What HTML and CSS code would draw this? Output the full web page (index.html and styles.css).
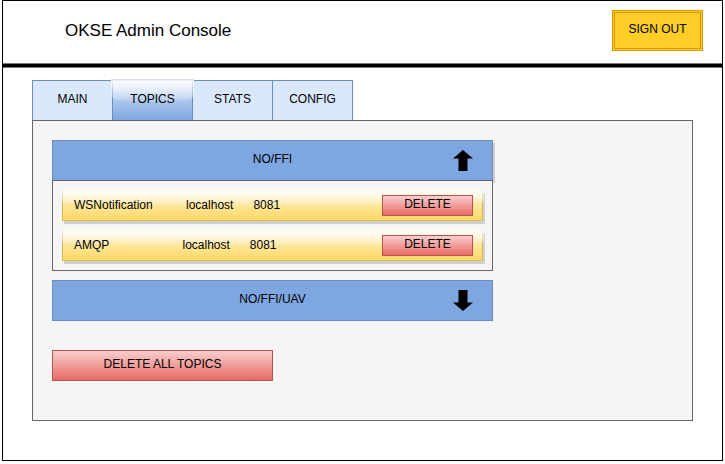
FILE: index.html
```html
<!DOCTYPE html>
<html lang="en">
<head>
<meta charset="utf-8">
<title>OKSE Admin Console</title>
<link rel="stylesheet" href="styles.css">
</head>
<body>
<div class="window">
  <header class="header">
    <h1 class="title">OKSE Admin Console</h1>
    <button class="sign-out" type="button">SIGN OUT</button>
  </header>
  <main class="content">
    <nav class="tabs">
      <a class="tab" href="#main">MAIN</a>
      <a class="tab tab-active glass" href="#topics" aria-current="page"><span class="label">TOPICS</span></a>
      <a class="tab" href="#stats">STATS</a>
      <a class="tab" href="#config">CONFIG</a>
    </nav>
    <section class="panel">
      <div class="topics">
        <div class="topic">
          <button class="topic-head topic-open" type="button" aria-expanded="true">
            <span class="topic-name">NO/FFI</span>
            <svg class="arrow" viewBox="0 0 20 21" aria-hidden="true"><path d="M10 0L20 8.500H14.500V21H5.500V8.500H0Z"/></svg>
          </button>
          <ul class="subscribers">
            <li class="subscriber glass">
              <span class="label details">WSNotification          localhost      8081</span>
              <button class="danger delete" type="button">DELETE</button>
            </li>
            <li class="subscriber glass">
              <span class="label details">AMQP                      localhost      8081</span>
              <button class="danger delete" type="button">DELETE</button>
            </li>
          </ul>
        </div>
        <div class="topic">
          <button class="topic-head" type="button" aria-expanded="false">
            <span class="topic-name">NO/FFI/UAV</span>
            <svg class="arrow" viewBox="0 0 20 21" aria-hidden="true"><path d="M10 21L20 12.500H14.500V0H5.500V12.500H0Z"/></svg>
          </button>
        </div>
      </div>
      <button class="danger delete-all" type="button">DELETE ALL TOPICS</button>
    </section>
  </main>
</div>
</body>
</html>
```
FILE: styles.css
```css
*,
*::before,
*::after {
  box-sizing: border-box;
}

body {
  margin: 0 2px;
  background: #fff;
  color: #000;
  font: 12px/14px "Liberation Sans", Arial, sans-serif;
}

button {
  margin: 0;
  padding: 0 0 3px;
  color: inherit;
  font: inherit;
  cursor: pointer;
}

.window {
  border: 1px solid #000;
  padding-bottom: 39px;
}

.header {
  position: relative;
  display: flex;
  justify-content: space-between;
  align-items: flex-start;
  padding: 9px 19px 12px 62px;
  border-bottom: 5px solid #000;
}

/* softened edges of the divider */
.header::after {
  content: "";
  position: absolute;
  left: 0;
  right: 0;
  bottom: -5px;
  height: 5px;
  border: solid #777;
  border-width: 1px 0;
}

.title {
  margin: 0;
  font-size: 17px;
  font-weight: 400;
  line-height: 41px;
}

.sign-out {
  width: 91px;
  height: 41px;
  border: 3px double #d79b00;
  background: #ffcd28;
}

.content {
  padding: 12px 29px 0;
}

.tabs {
  display: flex;
  margin-bottom: -1px;
}

.tab {
  display: flex;
  align-items: center;
  justify-content: center;
  width: 81px;
  height: 41px;
  margin-right: -1px;
  padding-bottom: 3px;
  border: 1px solid #6c8ebf;
  background: #dae8fc;
  color: inherit;
  text-decoration: none;
}

.tab-active {
  z-index: 1;
  background: linear-gradient(#dae8fc, #7ea6e0);
}

/* curved white highlight over the upper half */
.glass {
  position: relative;
}

.glass::before {
  content: "";
  position: absolute;
  top: -2px;
  left: -2px;
  right: -2px;
  height: 60%;
  border-radius: 0 0 50% 50% / 0 0 25% 25%;
  background: linear-gradient(rgba(255, 255, 255, 0.9), rgba(255, 255, 255, 0.1));
}

.tab-active::before {
  box-shadow: inset 0 1px #d5dfec;
}

.label {
  position: relative;
}

.panel {
  position: relative;
  z-index: 2;
  padding: 19px 19px 39px;
  border: 1px solid #666;
  background: #f5f5f5;
}

.topics {
  display: grid;
  gap: 9px;
  max-width: 441px;
  margin-bottom: 29px;
}

.topic-head {
  display: grid;
  grid-template-columns: 1fr auto 1fr;
  align-items: center;
  width: 100%;
  height: 41px;
  padding: 0 19px;
  border: 1px solid #6c8ebf;
  background: #7ea6e0;
}

.topic-open {
  height: 40px;
  border-bottom: 0;
  box-shadow: 2px 3px #d0d0d0;
}

.topic-name {
  grid-column: 2;
  padding-bottom: 3px;
}

.arrow {
  justify-self: end;
  width: 20px;
  height: 21px;
}

.subscribers {
  position: relative;
  display: grid;
  gap: 9px;
  margin: 0;
  padding: 9px;
  border: 1px solid #666;
  background: #f5f5f5;
  list-style: none;
}

.subscriber {
  display: flex;
  align-items: center;
  justify-content: space-between;
  height: 31px;
  padding: 0 9px 0 11px;
  border: 1px solid #d6b656;
  background: linear-gradient(#fff2cc, #ffd966);
  box-shadow: 2px 3px #d0d0d0;
}

.details {
  padding-bottom: 2px;
  white-space: pre;
}

.danger {
  position: relative;
  border: 1px solid #b85450;
  background: linear-gradient(#f8cecc, #ea6b66);
}

.delete {
  width: 91px;
  height: 21px;
}

.delete-all {
  display: block;
  width: 221px;
  height: 31px;
}
```
